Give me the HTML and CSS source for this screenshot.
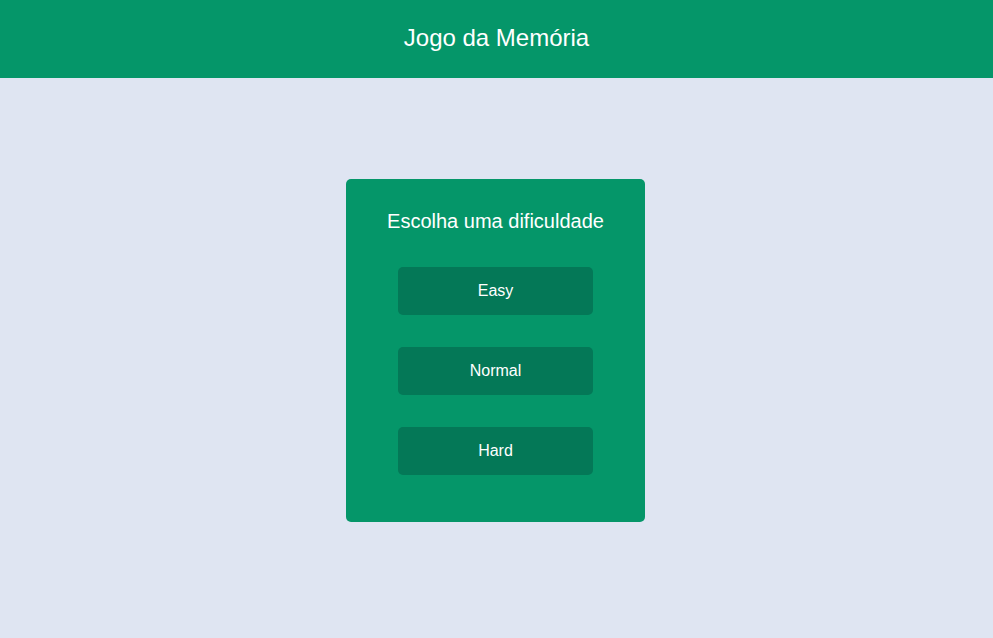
FILE: index.html
```html
<!DOCTYPE html>
<html lang="pt">
<head>
<meta charset="utf-8">
<title>Jogo da Memória</title>
<link rel="stylesheet" href="styles.css">
</head>
<body>
<header class="top-bar">
  <h1 class="title">Jogo da Memória</h1>
</header>
<main class="main">
  <section class="card">
    <h2 class="card-title">Escolha uma dificuldade</h2>
    <div class="options">
      <button class="option">Easy</button>
      <button class="option">Normal</button>
      <button class="option">Hard</button>
    </div>
  </section>
</main>
</body>
</html>
```
FILE: styles.css
```css
* { box-sizing: border-box; }
html, body { margin: 0; padding: 0; }
body {
  background: #dfe5f2;
  font-family: "Liberation Sans", Arial, sans-serif;
  color: #fff;
  min-height: 100vh;
}
.top-bar {
  background: #059669;
  height: 78px;
  display: flex;
  align-items: center;
  justify-content: center;
  padding-bottom: 2px;
}
.title {
  margin: 0;
  font-size: 24px;
  font-weight: 400;
  line-height: 28px;
}
.main {
  display: flex;
  justify-content: center;
  padding-top: 101px;
  padding-right: 2px;
}
.card {
  width: 299px;
  background: #059669;
  border-radius: 5px;
  padding: 30px 20px 47px;
  display: flex;
  flex-direction: column;
  align-items: center;
}
.card-title {
  margin: 0 0 34px;
  text-align: center;
  font-size: 20px;
  font-weight: 400;
  line-height: 24px;
  white-space: nowrap;
}
.options {
  display: flex;
  flex-direction: column;
  gap: 32px;
  width: 195px;
}
.option {
  height: 48px;
  border: none;
  border-radius: 5px;
  background: #047857;
  color: #fff;
  font-family: "Liberation Sans", Arial, sans-serif;
  font-size: 16px;
  cursor: pointer;
}
```
